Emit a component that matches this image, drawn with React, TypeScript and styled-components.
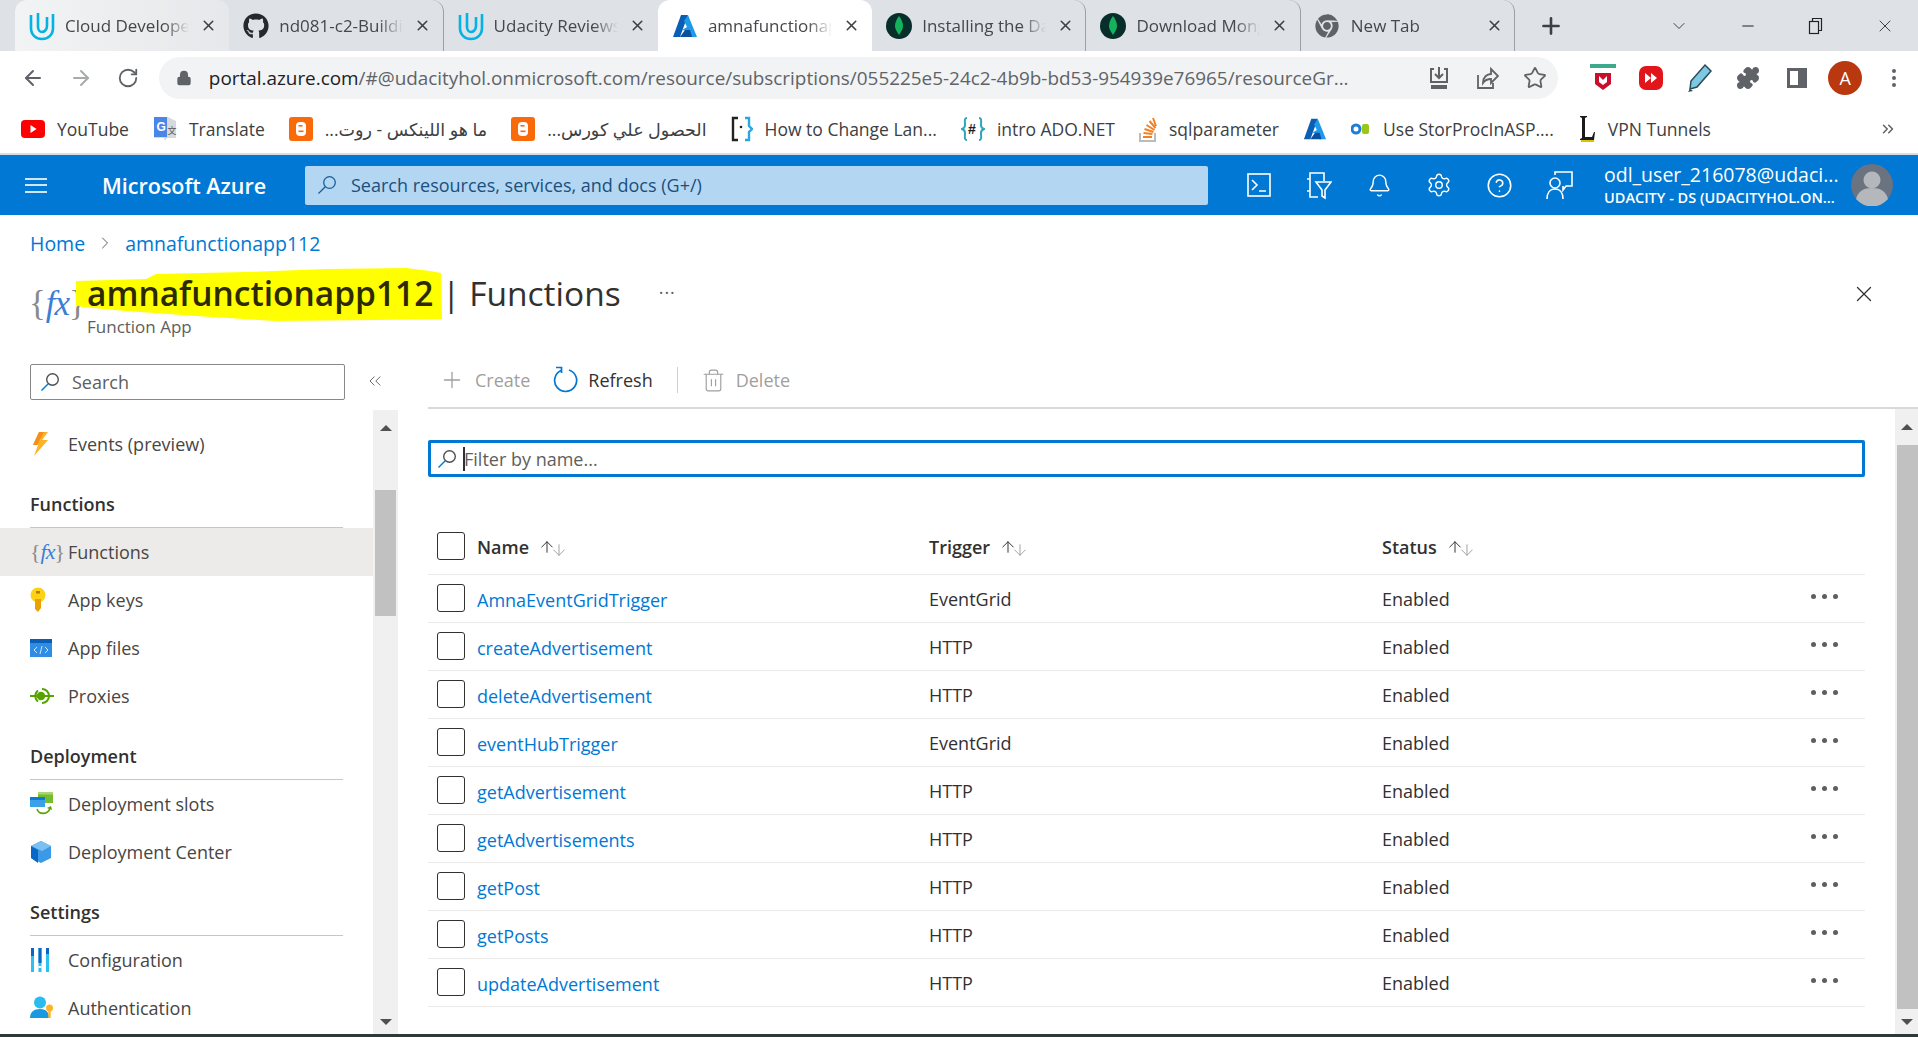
import React from 'react'
import styled, { createGlobalStyle } from 'styled-components'
import { FaGithub, FaChrome } from 'react-icons/fa'
import { ArrowLeft, ArrowRight, RotateCw, Lock, Star, Puzzle, Plus, Minus, X, ChevronDown, Bell, Settings, CircleHelp, EllipsisVertical, ChevronsRight, ChevronRight, ChevronsLeft, Trash2, ArrowUp, ArrowDown } from 'lucide-react'

const FONT = '"Open Sans", "Noto Sans", "DejaVu Sans", sans-serif'

const GlobalStyle = createGlobalStyle`
  html, body { margin: 0; padding: 0; background: #fff; }
  body { font-family: ${FONT}; color: #323130; }
  * { box-sizing: border-box; }
`

/* ---------- drawn icons ---------- */
const UdacityLogo = () => (
  <svg width="26" height="30" viewBox="0 0 26 30" fill="none" stroke="#02b3e4" strokeWidth="2.6">
    <path d="M2 4v13c0 7 5 11 11 11s11-4 11-11V3" />
    <path d="M9 2v14c0 3 2 5 4 5s5-2 5-6V6" />
  </svg>
)
const AzureLogo = ({ size = 26 }: { size?: number }) => (
  <svg width={size} height={size} viewBox="0 0 26 26">
    <path d="M9 2h7L8 24H1z" fill="#0a5fb4" />
    <path d="M16 2l9 22h-7l-2-6-6-1 5-3-3-6z" fill="#1f9ae8" />
    <path d="M8 24l5-7h5l2 7z" fill="#0b4f9e" />
  </svg>
)
const MongoLogo = () => (
  <svg width="26" height="26" viewBox="0 0 26 26">
    <circle cx="13" cy="13" r="13" fill="#072e2a" />
    <path d="M13 3c3 4 4 7 4 10s-2 6-4 9c-2-3-4-6-4-9s1-6 4-10z" fill="#12b35c" />
  </svg>
)
const BloggerLogo = () => (
  <svg width="24" height="24" viewBox="0 0 24 24">
    <rect width="24" height="24" rx="3" fill="#f96a0b" />
    <rect x="7" y="5" width="10" height="14" rx="4" fill="#fff" />
    <rect x="9.5" y="8" width="4" height="1.6" fill="#f96a0b" />
    <rect x="9.5" y="13.5" width="5" height="1.6" fill="#f96a0b" />
  </svg>
)
const YoutubeLogo = () => (
  <svg width="24" height="18" viewBox="0 0 24 18">
    <rect width="24" height="18" rx="4" fill="#f00" />
    <path d="M9.5 5l6 4-6 4z" fill="#fff" />
  </svg>
)
const TranslateLogo = () => (
  <svg width="24" height="26" viewBox="0 0 24 26">
    <path d="M1 1h14l8 4v17l-9 0-2 3-1-3H1z" fill="#d7d9dc" />
    <path d="M1 1h13v20H1z" fill="#4a86e8" />
    <text x="3.5" y="15" fontSize="12" fontWeight="700" fill="#fff" fontFamily="Liberation Sans">G</text>
    <text x="14.5" y="18" fontSize="9" fill="#555" fontFamily="Noto Sans CJK SC">文</text>
  </svg>
)
const BracketLogo = () => (
  <svg width="22" height="26" viewBox="0 0 22 26" fill="none" strokeWidth="2.4">
    <path d="M7 2H2v22h5" stroke="#222" />
    <path d="M14 2h4v8l3 3-3 3v8h-4" stroke="#2aa7e0" />
    <circle cx="10" cy="11" r="1.3" fill="#222" />
  </svg>
)
const CSharpLogo = () => (
  <svg width="24" height="26" viewBox="0 0 24 26" fill="none">
    <path d="M6 2C3 2 4 6 4 9s-3 4-3 4 3 1 3 4-1 7 2 7M18 2c3 0 2 4 2 7s3 4 3 4-3 1-3 4 1 7-2 7" stroke="#2fa6b8" strokeWidth="2" />
    <text x="7" y="18" fontSize="14" fontWeight="700" fill="#222" fontFamily="Liberation Sans">#</text>
  </svg>
)
const StackLogo = () => (
  <svg width="18" height="26" viewBox="0 0 18 26" fill="none">
    <path d="M1 17v8h15v-8" stroke="#bcbbbb" strokeWidth="2" />
    <path d="M4 21h9M4.500 17l9 1M5.500 13l9 3M7.500 9l8 5M10.500 5l6 7M14 2l3 8" stroke="#f48024" strokeWidth="2" />
  </svg>
)
const OBLogo = () => (
  <svg width="20" height="14" viewBox="0 0 20 14">
    <circle cx="5" cy="7" r="4" fill="none" stroke="#1c7ed6" strokeWidth="3" />
    <rect x="11" y="2" width="7" height="10" rx="2" fill="#9ac61c" />
  </svg>
)
const LetterLogo = () => (
  <svg width="18" height="28" viewBox="0 0 18 28">
    <path d="M2 1h7v1l-2 1v19h7l2-5h1l-1 8H2v-1l2-1V3L2 2z" fill="#1b1b1b" />
    <rect x="3" y="25" width="13" height="2" fill="#d9c400" />
  </svg>
)
const McAfeeLogo = () => (
  <svg width="26" height="28" viewBox="0 0 26 28">
    <rect x="0" y="0" width="26" height="4" fill="#3fa98c" />
    <path d="M5 9h16v11l-8 6-8-6z" fill="#c8102e" />
    <path d="M9 12v6l4 3 4-3v-6l-4 4z" fill="#fff" />
  </svg>
)
const RedPlayLogo = () => (
  <svg width="24" height="24" viewBox="0 0 24 24">
    <rect width="24" height="24" rx="7" fill="#e0161b" />
    <path d="M6 7l6 5-6 5zM12 7l6 5-6 5z" fill="#fff" />
  </svg>
)
const MarkerIcon = () => (
  <svg width="26" height="30" viewBox="0 0 26 30">
    <path d="M18 2l6 6-14 16-7 2 1-8z" fill="#7ec8e3" stroke="#2a4b5a" strokeWidth="1.5" />
    <path d="M3 26l-2 3 5-1z" fill="#2a4b5a" />
  </svg>
)
const InstallIcon = () => (
  <svg width="24" height="24" viewBox="0 0 24 24" fill="none" stroke="#5f6368" strokeWidth="2">
    <path d="M7 3H4v13h16V3h-3" />
    <path d="M12 1v10M8 8l4 4 4-4" />
    <path d="M5 20h14v2H5z" fill="#5f6368" />
  </svg>
)
const ShareIcon = () => (
  <svg width="24" height="24" viewBox="0 0 24 24" fill="none" stroke="#5f6368" strokeWidth="1.8">
    <path d="M3 9v13h15v-5" />
    <path d="M8 17c0-6 4-9 8-9V3l7 7-7 7v-4c-4 0-6 1-8 4z" />
  </svg>
)
const SidePanelIcon = () => (
  <svg width="22" height="22" viewBox="0 0 22 22">
    <path d="M1 1h20v20H1z" fill="#5f6368" />
    <path d="M4 4h8v14H4z" fill="#fff" />
  </svg>
)
const RestoreIcon = () => (
  <svg width="18" height="18" viewBox="0 0 18 18" fill="none" stroke="#222" strokeWidth="1.2">
    <rect x="2.500" y="4.500" width="9" height="12" />
    <path d="M5.500 4.500v-3h9v12h-3" />
  </svg>
)
const TerminalIcon = () => (
  <svg width="26" height="26" viewBox="0 0 26 26" fill="none" stroke="#fff" strokeWidth="1.6">
    <rect x="2" y="2" width="22" height="22" />
    <path d="M6 8l5 5-5 5M13 19h7" />
  </svg>
)
const DirectoryIcon = () => (
  <svg width="26" height="30" viewBox="0 0 26 30" fill="none" stroke="#fff" strokeWidth="1.6">
    <path d="M4 6V3h14v8M4 24v3h8M4 6v18" />
    <path d="M1 9h3M1 21h3" />
    <path d="M10 12h15l-6 8v8l-3-2v-6z" />
  </svg>
)
const FeedbackIcon = () => (
  <svg width="28" height="30" viewBox="0 0 28 30" fill="none" stroke="#fff" strokeWidth="1.6">
    <path d="M10 5V2h17v14h-6l-3 4v-4" />
    <circle cx="10" cy="13" r="5" />
    <path d="M2 29c0-6 3-10 8-10s8 4 8 10" />
  </svg>
)
const UserAvatar = () => (
  <svg width="42" height="42" viewBox="0 0 42 42">
    <circle cx="21" cy="21" r="21" fill="#6b7280" />
    <circle cx="21" cy="16" r="8.500" fill="#b4b7bb" />
    <path d="M5 35c2-8 8-11 16-11s14 3 16 11a21 21 0 0 1-32 0z" fill="#b4b7bb" />
  </svg>
)
const SearchGlyph = ({ size = 20 }: { size?: number }) => (
  <svg width={size} height={size} viewBox="0 0 20 20" fill="none" stroke="#0078d4" strokeWidth="1.4">
    <circle cx="12.500" cy="7.500" r="5.800" stroke="#505050" />
    <path d="M8.300 11.700L1.500 18.500" />
  </svg>
)
const HeaderSearchGlyph = () => (
  <svg width="20" height="22" viewBox="0 0 20 20" fill="none" stroke="#1b5e99" strokeWidth="1.3">
    <circle cx="12.500" cy="7.500" r="5.800" />
    <path d="M8.300 11.700L1.500 18.500" />
  </svg>
)
const RefreshGlyph = () => (
  <svg width="26" height="28" viewBox="0 0 26 28" fill="none" stroke="#0078d4" strokeWidth="1.7">
    <path d="M9 4.500A11 11 0 1 0 17 4" />
    <path d="M4 1.500h5.500V7" />
  </svg>
)
const Bolt = () => (
  <svg width="20" height="26" viewBox="0 0 20 26">
    <path d="M9 1h9l-6 8h6L4 25l4-11H3z" fill="#fcb426" />
    <path d="M9 1h5L7 14H3z" fill="#f78d1e" />
  </svg>
)
const KeyIcon = () => (
  <svg width="18" height="26" viewBox="0 0 18 26">
    <circle cx="8" cy="8" r="7.500" fill="#fcd116" />
    <path d="M5 12h6v9l-3 4-3-3z" fill="#eaa200" />
    <rect x="6" y="4" width="4" height="2.500" fill="#b97c00" />
  </svg>
)
const AppFilesIcon = () => (
  <svg width="22" height="18" viewBox="0 0 22 18">
    <rect width="22" height="18" fill="#2f8de4" />
    <rect width="22" height="4" fill="#0a5fb4" />
    <path d="M7 8l-3 3 3 3M15 8l3 3-3 3M12 7l-2 8" stroke="#cfe6fb" strokeWidth="1" fill="none" />
  </svg>
)
const ProxyIcon = () => (
  <svg width="24" height="16" viewBox="0 0 24 16" fill="none" stroke="#57a300" strokeWidth="2">
    <path d="M0 8h24" />
    <path d="M12 1a7 7 0 0 1 0 14" />
    <path d="M8 2.500a7 7 0 0 0 0 11" />
    <circle cx="11" cy="8" r="3.300" fill="#57a300" />
  </svg>
)
const SlotsIcon = () => (
  <svg width="24" height="24" viewBox="0 0 24 24">
    <rect x="8" y="0" width="15" height="11" fill="#76bc2d" />
    <rect x="8" y="0" width="15" height="2.500" fill="#a7d672" />
    <rect x="0" y="5" width="15" height="10" fill="#3aa0e8" />
    <rect x="0" y="5" width="15" height="3" fill="#0a7cd1" />
    <path d="M7 17c2 6 11 6 13-1" fill="none" stroke="#57a300" strokeWidth="1.600" />
    <path d="M17 16l4-2 1 4z" fill="#57a300" />
  </svg>
)
const BoxIcon = () => (
  <svg width="22" height="24" viewBox="0 0 22 24">
    <path d="M11 1l10 5v12l-10 5-10-5V6z" fill="#3a9ae8" />
    <path d="M11 1l10 5-9 5L1 6z" fill="#7cc0f2" />
    <path d="M1 6l7 4v13l-7-5z" fill="#0a68c4" />
  </svg>
)
const ConfigIcon = () => (
  <svg width="20" height="24" viewBox="0 0 20 24">
    <rect x="1" y="0" width="3" height="24" fill="#2bc0ef" />
    <rect x="1" y="0" width="3" height="8" fill="#0a68c4" />
    <rect x="8.500" y="0" width="3" height="24" fill="#2bc0ef" />
    <rect x="8.500" y="0" width="3" height="15" fill="#0a68c4" />
    <rect x="8.500" y="18" width="3" height="2" fill="#fff" />
    <rect x="16" y="0" width="3" height="24" fill="#2bc0ef" />
    <rect x="16" y="0" width="3" height="6" fill="#0a68c4" />
  </svg>
)
const AuthIcon = () => (
  <svg width="24" height="24" viewBox="0 0 24 24">
    <circle cx="10" cy="6.500" r="6" fill="#2bbcef" />
    <path d="M0 22c0-6 4-9 10-9s9 3 9 9z" fill="#1a98e0" />
    <circle cx="19.500" cy="12" r="3.500" fill="#fcb426" />
    <rect x="18.300" y="13" width="2.400" height="9" fill="#fcb426" />
  </svg>
)

/* ---------- browser chrome ---------- */
const Page = styled.div`
  width: 1918px;
  height: 1037px;
  overflow: hidden;
  display: flex;
  flex-direction: column;
`
const TabStrip = styled.div`
  height: 51px;
  background: #dee1e6;
  display: flex;
  align-items: stretch;
  padding-left: 15px;
`
const Tab = styled.div<{ $active?: boolean; $hover?: boolean; $sep?: boolean }>`
  position: relative;
  width: 214.3px;
  display: flex;
  align-items: center;
  padding-left: 14px;
  background: ${p => (p.$active ? '#fff' : p.$hover ? 'linear-gradient(90deg, #f1f3f4, #e6e8eb)' : 'transparent')};
  border-radius: 12px 12px 0 0;
  border-right: ${p => (p.$sep ? '1px solid #9aa0a6' : 'none')};
  background-clip: padding-box;
  margin-top: ${p => (p.$active || p.$hover ? '0' : '0')};
`
const TabIcon = styled.span`
  width: 36px;
  flex: none;
  display: flex;
  align-items: center;
`
const TabLabel = styled.span<{ $active?: boolean }>`
  width: 124px;
  flex: none;
  overflow: hidden;
  white-space: nowrap;
  font-size: 17px;
  color: #45474a;
  -webkit-mask-image: linear-gradient(90deg, #000 80%, transparent 100%);
  mask-image: linear-gradient(90deg, #000 80%, transparent 100%);
`
const TabClose = styled.span`
  margin-left: 11px;
  display: flex;
  color: #3c4043;
`
const NewTab = styled.span`
  margin-left: 23px;
  display: flex;
  align-items: center;
  color: #3c4043;
`
const WindowControls = styled.div`
  margin-left: auto;
  display: flex;
  align-items: center;
  gap: 50px;
  padding-right: 23px;
  color: #222;
`
const AddressRow = styled.div`
  height: 54px;
  background: #fff;
  display: flex;
  align-items: center;
  padding-left: 21px;
`
const NavButton = styled.span<{ $dim?: boolean }>`
  width: 48px;
  display: flex;
  color: ${p => (p.$dim ? '#a8abae' : '#5f6368')};
`
const Omnibox = styled.div`
  width: 1401px;
  height: 42px;
  margin-left: -6px;
  background: #f1f3f4;
  border-radius: 21px;
  display: flex;
  align-items: center;
  padding-left: 17px;
`
const LockSlot = styled.span`
  width: 33px;
  display: flex;
  color: #5f6368;
`
const Url = styled.span`
  width: 1212px;
  font-size: 18.9px;
  color: #5f6368;
  white-space: nowrap;
  overflow: hidden;
  b { font-weight: 400; color: #202124; }
`
const OmniActions = styled.div`
  display: flex;
  gap: 24px;
  align-items: center;
  margin-left: 6px;
  color: #5f6368;
`
const Extensions = styled.div`
  margin-left: 20px;
  display: flex;
  align-items: center;
  color: #5f6368;
  width: 340px;
`
const ExtSlot = styled.span`
  width: 48.500px;
  display: flex;
  justify-content: center;
`
const ProfileCircle = styled.span`
  width: 34px;
  height: 34px;
  border-radius: 50%;
  background: #b9380f;
  color: #fff;
  font-size: 18px;
  display: flex;
  align-items: center;
  justify-content: center;
`
const BookmarkBar = styled.div`
  height: 50px;
  background: #fff;
  border-bottom: 2px solid #dadce0;
  display: flex;
  align-items: center;
  padding: 0 21px;
  gap: 24px;
`
const Bookmark = styled.span`
  display: flex;
  align-items: center;
  gap: 12px;
  font-size: 17.500px;
  white-space: nowrap;
  color: #3c4043;
`
const BookmarkMore = styled.span`
  margin-left: auto;
  display: flex;
  color: #5f6368;
`

/* ---------- azure header ---------- */
const AzureBar = styled.header`
  height: 60px;
  background: #0078d4;
  display: flex;
  align-items: center;
  color: #fff;
`
const Hamburger = styled.span`
  width: 22px;
  height: 15px;
  margin-left: 25px;
  border-top: 2px solid #cfe6fb;
  border-bottom: 2px solid #cfe6fb;
  position: relative;
  &::after {
    content: '';
    position: absolute;
    left: 0;
    right: 0;
    top: 4.500px;
    height: 2px;
    background: #cfe6fb;
  }
`
const Brand = styled.span`
  width: 203px;
  margin-left: 55px;
  font-size: 21.500px;
  font-weight: 600;
  white-space: nowrap;
`
const GlobalSearch = styled.div`
  width: 903px;
  height: 39px;
  background: #b3d6f2;
  border-radius: 2px;
  display: flex;
  align-items: center;
  gap: 14px;
  padding-left: 12px;
  font-size: 18px;
  color: #1b4f7d;
`
const HeaderIcons = styled.div`
  margin-left: 21px;
  display: flex;
  align-items: center;
`
const HeaderIcon = styled.span`
  width: 60px;
  display: flex;
  justify-content: center;
`
const Account = styled.div`
  margin-left: 15px;
  width: 247px;
  display: flex;
  flex-direction: column;
  line-height: 1;
`
const AccountName = styled.span`
  font-size: 19.500px;
  white-space: nowrap;
`
const AccountDirectory = styled.span`
  font-size: 14.500px;
  font-weight: 600;
  margin-top: 6px;
  white-space: nowrap;
`

/* ---------- blade ---------- */
const Breadcrumb = styled.nav`
  height: 55px;
  display: flex;
  align-items: center;
  gap: 10px;
  padding: 1px 0 0 30px;
  font-size: 19.500px;
  color: #0078d4;
`
const Crumb = styled.span`
  white-space: nowrap;
`
const TitleBlock = styled.div`
  height: 75px;
  position: relative;
  display: flex;
  padding-left: 29px;
`
const FxLogo = styled.span<{ $small?: boolean }>`
  font-family: "Liberation Serif", serif;
  font-size: ${p => (p.$small ? '22px' : '35px')};
  line-height: 1;
  color: #8a8a8a;
  white-space: nowrap;
  i { color: #3a7fd5; letter-spacing: -1px; }
`
const TitleLogoSlot = styled.span`
  width: 58px;
  padding-top: 16px;
  flex: none;
`
const TitleText = styled.div`
  position: relative;
  flex: none;
`
const Marker = styled.svg`
  position: absolute;
  left: -11px;
  top: -3px;
  z-index: 0;
`
const Title = styled.h1`
  position: relative;
  margin: 0;
  font-size: 33.500px;
  font-weight: 400;
  line-height: 46px;
  white-space: nowrap;
  color: #323130;
  b { font-weight: 600; color: #2d2a00; }
`
const Subtitle = styled.div`
  position: relative;
  font-size: 17px;
  line-height: 24px;
  margin-top: -1px;
  color: #605e5c;
`
const TitleMore = styled.span`
  margin: 10px 0 0 38px;
  font-size: 18px;
  color: #605e5c;
  letter-spacing: 1px;
`
const BladeClose = styled.span`
  margin-left: auto;
  margin-right: 41px;
  margin-top: 11px;
  color: #323130;
`
const Body = styled.div`
  flex: 1;
  display: flex;
  min-height: 0;
`
const Sidebar = styled.aside`
  width: 398px;
  flex: none;
  display: flex;
  flex-direction: column;
`
const SideSearchRow = styled.div`
  height: 65px;
  display: flex;
  align-items: flex-start;
  padding: 19px 0 0 30px;
`
const SideSearch = styled.div`
  width: 315px;
  height: 36px;
  border: 1px solid #8a8886;
  border-radius: 2px;
  display: flex;
  align-items: center;
  gap: 12px;
  padding-left: 9px;
  font-size: 18px;
  color: #605e5c;
`
const Collapse = styled.span`
  margin: 7px 0 0 20px;
  color: #605e5c;
  display: flex;
`
const SideScrollArea = styled.div`
  flex: 1;
  min-height: 0;
  display: flex;
`
const SideNav = styled.div`
  width: 373px;
  flex: none;
  padding-top: 10px;
  overflow: hidden;
`
const NavItem = styled.div<{ $active?: boolean }>`
  height: 48px;
  display: flex;
  align-items: center;
  padding-left: 30px;
  font-size: 18px;
  color: #484644;
  background: ${p => (p.$active ? '#edebe9' : 'transparent')};
  white-space: nowrap;
`
const NavIcon = styled.span`
  width: 38px;
  flex: none;
  display: flex;
  align-items: center;
`
const NavHeader = styled.div`
  height: 60px;
  margin: 0 30px;
  width: 313px;
  display: flex;
  align-items: flex-end;
  padding-bottom: 11px;
  border-bottom: 1px solid #c8c6c4;
  font-size: 18px;
  font-weight: 600;
  color: #323130;
`
const Scrollbar = styled.div<{ $width: number }>`
  width: ${p => p.$width}px;
  flex: none;
  background: #f0f0f0;
  display: flex;
  flex-direction: column;
  align-items: center;
  position: relative;
`
const ScrollBtn = styled.span<{ $down?: boolean }>`
  height: ${p => (p.$down ? '25px' : '36px')};
  flex: none;
  display: flex;
  align-items: center;
  justify-content: center;
  &::before {
    content: '';
    border-left: 6px solid transparent;
    border-right: 6px solid transparent;
    ${p => (p.$down ? 'border-top: 6px solid #505050;' : 'border-bottom: 6px solid #505050;')}
  }
`
const ScrollThumb = styled.span<{ $right?: boolean }>`
  display: block;
  width: 21px;
  background: #c1c1c1;
  flex: none;
  align-self: ${p => (p.$right ? 'flex-end' : 'center')};
`
const ScrollGap = styled.span`
  flex: 1;
`
const Main = styled.main`
  flex: 1;
  min-width: 0;
  padding-left: 30px;
  display: flex;
  flex-direction: column;
`
const Toolbar = styled.div`
  height: 64px;
  flex: none;
  border-bottom: 2px solid #d9d9d9;
  display: flex;
  align-items: center;
  padding: 8px 0 0 11px;
  font-size: 18px;
`
const ToolButton = styled.span<{ $disabled?: boolean }>`
  display: flex;
  align-items: center;
  gap: 10px;
  color: ${p => (p.$disabled ? '#a19f9d' : '#323130')};
`
const ToolSep = styled.span`
  width: 1px;
  height: 26px;
  background: #d2d0ce;
  margin: 0 23px 0 24px;
`
const FilterBox = styled.div`
  width: 1437px;
  height: 37px;
  margin-top: 31px;
  flex: none;
  border: 3px solid #0078d4;
  border-radius: 2px;
  display: flex;
  align-items: center;
  padding-left: 6px;
  font-size: 18px;
  color: #605e5c;
`
const Caret = styled.span`
  width: 2px;
  height: 24px;
  background: #323130;
  margin: 0 -1px 0 6px;
`
const Table = styled.div`
  width: 1437px;
  margin-top: 43px;
`
const RowGrid = styled.div<{ $head?: boolean }>`
  display: grid;
  grid-template-columns: 49px 452px 453px 1fr 54px;
  align-items: center;
  height: ${p => (p.$head ? '55px' : '48px')};
  border-bottom: 1px solid #edebe9;
  font-size: 18px;
  color: #323130;
`
const CheckBox = styled.span`
  width: 28px;
  height: 28px;
  margin-left: 9px;
  margin-top: -2px;
  border: 1px solid #323130;
  border-radius: 3px;
`
const HeadCell = styled.span`
  display: flex;
  align-items: center;
  gap: 9px;
  font-weight: 600;
`
const SortArrows = styled.span`
  display: flex;
  align-items: center;
  svg + svg { margin-left: -6px; margin-top: 5px; }
`
const FnLink = styled.a`
  color: #0078d4;
  margin-top: 3px;
  text-decoration: none;
`
const Dots = styled.span`
  display: flex;
  gap: 6px;
  margin-top: -4px;
  i { width: 5px; height: 5px; border-radius: 50%; background: #605e5c; }
`
const MainScroll = styled.div`
  display: flex;
`
const MainColumn = styled.div`
  flex: 1;
  min-width: 0;
`
const TaskEdge = styled.div`
  height: 3px;
  flex: none;
  background: #2b3a38;
`

const tabs = [
  { icon: <UdacityLogo />, label: 'Cloud Developer', hover: true },
  { icon: <FaGithub size={26} color="#24292e" />, label: 'nd081-c2-Building', sep: true },
  { icon: <UdacityLogo />, label: 'Udacity Reviews' },
  { icon: <AzureLogo />, label: 'amnafunctionapp', active: true },
  { icon: <MongoLogo />, label: 'Installing the Database', sep: true },
  { icon: <MongoLogo />, label: 'Download MongoDB', sep: true },
  { icon: <FaChrome size={24} color="#5f6368" />, label: 'New Tab', sep: true },
]

const functions = [
  ['AmnaEventGridTrigger', 'EventGrid'],
  ['createAdvertisement', 'HTTP'],
  ['deleteAdvertisement', 'HTTP'],
  ['eventHubTrigger', 'EventGrid'],
  ['getAdvertisement', 'HTTP'],
  ['getAdvertisements', 'HTTP'],
  ['getPost', 'HTTP'],
  ['getPosts', 'HTTP'],
  ['updateAdvertisement', 'HTTP'],
]

const Sort = () => (
  <SortArrows>
    <ArrowUp size={18} strokeWidth={1.3} color="#323130" />
    <ArrowDown size={18} strokeWidth={1.3} color="#a19f9d" />
  </SortArrows>
)

const App = () => {
  return (
    <Page>
      <GlobalStyle />
      <TabStrip>
        {tabs.map(t => (
          <Tab key={t.label} $active={t.active} $hover={t.hover} $sep={t.sep}>
            <TabIcon>{t.icon}</TabIcon>
            <TabLabel>{t.label}</TabLabel>
            <TabClose><X size={17} strokeWidth={2.2} /></TabClose>
          </Tab>
        ))}
        <NewTab><Plus size={26} strokeWidth={2.4} /></NewTab>
        <WindowControls>
          <ChevronDown size={20} strokeWidth={1} />
          <Minus size={18} strokeWidth={1.4} />
          <RestoreIcon />
          <X size={20} strokeWidth={1} />
        </WindowControls>
      </TabStrip>

      <AddressRow>
        <NavButton><ArrowLeft size={24} strokeWidth={2} /></NavButton>
        <NavButton $dim><ArrowRight size={24} strokeWidth={2} /></NavButton>
        <NavButton><RotateCw size={22} strokeWidth={2} /></NavButton>
        <Omnibox>
          <LockSlot><Lock size={16} fill="#5f6368" /></LockSlot>
          <Url><b>portal.azure.com</b>/#@udacityhol.onmicrosoft.com/resource/subscriptions/055225e5-24c2-4b9b-bd53-954939e76965/resourceGr...</Url>
          <OmniActions>
            <InstallIcon />
            <ShareIcon />
            <Star size={24} strokeWidth={1.8} />
          </OmniActions>
        </Omnibox>
        <Extensions>
          <ExtSlot><McAfeeLogo /></ExtSlot>
          <ExtSlot><RedPlayLogo /></ExtSlot>
          <ExtSlot><MarkerIcon /></ExtSlot>
          <ExtSlot><Puzzle size={24} fill="#5f6368" /></ExtSlot>
          <ExtSlot><SidePanelIcon /></ExtSlot>
          <ExtSlot><ProfileCircle>A</ProfileCircle></ExtSlot>
          <ExtSlot><EllipsisVertical size={24} /></ExtSlot>
        </Extensions>
      </AddressRow>

      <BookmarkBar>
        <Bookmark><YoutubeLogo />YouTube</Bookmark>
        <Bookmark><TranslateLogo />Translate</Bookmark>
        <Bookmark><BloggerLogo /><span dir="rtl">ما هو اللينكس - روت...</span></Bookmark>
        <Bookmark><BloggerLogo /><span dir="rtl">الحصول علي كورس...</span></Bookmark>
        <Bookmark><BracketLogo />How to Change Lan...</Bookmark>
        <Bookmark><CSharpLogo />intro ADO.NET</Bookmark>
        <Bookmark><StackLogo />sqlparameter</Bookmark>
        <Bookmark><AzureLogo size={24} /></Bookmark>
        <Bookmark><OBLogo />Use StorProcInASP....</Bookmark>
        <Bookmark><LetterLogo />VPN Tunnels</Bookmark>
        <BookmarkMore><ChevronsRight size={18} /></BookmarkMore>
      </BookmarkBar>

      <AzureBar>
        <Hamburger />
        <Brand>Microsoft Azure</Brand>
        <GlobalSearch><HeaderSearchGlyph />Search resources, services, and docs (G+/)</GlobalSearch>
        <HeaderIcons>
          <HeaderIcon><TerminalIcon /></HeaderIcon>
          <HeaderIcon><DirectoryIcon /></HeaderIcon>
          <HeaderIcon><Bell size={25} strokeWidth={1.3} /></HeaderIcon>
          <HeaderIcon><Settings size={26} strokeWidth={1.3} /></HeaderIcon>
          <HeaderIcon><CircleHelp size={27} strokeWidth={1.4} /></HeaderIcon>
          <HeaderIcon><FeedbackIcon /></HeaderIcon>
        </HeaderIcons>
        <Account>
          <AccountName>odl_user_216078@udaci...</AccountName>
          <AccountDirectory>UDACITY - DS (UDACITYHOL.ON...</AccountDirectory>
        </Account>
        <UserAvatar />
      </AzureBar>

      <Breadcrumb>
        <Crumb>Home</Crumb>
        <ChevronRight size={20} strokeWidth={1.2} color="#605e5c" />
        <Crumb>amnafunctionapp112</Crumb>
      </Breadcrumb>

      <TitleBlock>
        <TitleLogoSlot>
          <FxLogo>{'{'}<i>fx</i>{'}'}</FxLogo>
        </TitleLogoSlot>
        <TitleText>
          <Marker width="380" height="60" viewBox="0 0 380 60">
            <path d="M0 14 L70 12 L80 7 L170 5 L250 2 L330 1 L354 4 L365 6 L366 52 L300 53 L200 54 L120 49 L50 44 L6 40 L0 38 Z" fill="#ffff00" />
          </Marker>
          <Title><b>amnafunctionapp112</b> | Functions</Title>
          <Subtitle>Function App</Subtitle>
        </TitleText>
        <TitleMore>···</TitleMore>
        <BladeClose><X size={26} strokeWidth={1.2} /></BladeClose>
      </TitleBlock>

      <Body>
        <Sidebar>
          <SideSearchRow>
            <SideSearch><SearchGlyph />Search</SideSearch>
            <Collapse><ChevronsLeft size={20} strokeWidth={1.1} /></Collapse>
          </SideSearchRow>
          <SideScrollArea>
            <SideNav>
              <NavItem><NavIcon><Bolt /></NavIcon>Events (preview)</NavItem>
              <NavHeader>Functions</NavHeader>
              <NavItem $active><NavIcon><FxLogo $small>{'{'}<i>fx</i>{'}'}</FxLogo></NavIcon>Functions</NavItem>
              <NavItem><NavIcon><KeyIcon /></NavIcon>App keys</NavItem>
              <NavItem><NavIcon><AppFilesIcon /></NavIcon>App files</NavItem>
              <NavItem><NavIcon><ProxyIcon /></NavIcon>Proxies</NavItem>
              <NavHeader>Deployment</NavHeader>
              <NavItem><NavIcon><SlotsIcon /></NavIcon>Deployment slots</NavItem>
              <NavItem><NavIcon><BoxIcon /></NavIcon>Deployment Center</NavItem>
              <NavHeader>Settings</NavHeader>
              <NavItem><NavIcon><ConfigIcon /></NavIcon>Configuration</NavItem>
              <NavItem><NavIcon><AuthIcon /></NavIcon>Authentication</NavItem>
            </SideNav>
            <Scrollbar $width={25}>
              <ScrollBtn />
              <ScrollThumb style={{ height: 126, marginTop: 44 }} />
              <ScrollGap />
              <ScrollBtn $down />
            </Scrollbar>
          </SideScrollArea>
        </Sidebar>
        <Main>
          <Toolbar>
            <ToolButton $disabled><Plus size={26} strokeWidth={1.2} />Create</ToolButton>
            <ToolButton style={{ marginLeft: 22 }}><RefreshGlyph />Refresh</ToolButton>
            <ToolSep />
            <ToolButton $disabled><Trash2 size={25} strokeWidth={1.1} />Delete</ToolButton>
          </Toolbar>
          <MainScroll style={{ flex: 1, minHeight: 0 }}>
            <MainColumn>
              <FilterBox>
                <SearchGlyph />
                <Caret />Filter by name...
              </FilterBox>
              <Table>
                <RowGrid $head>
                  <CheckBox />
                  <HeadCell>Name <Sort /></HeadCell>
                  <HeadCell>Trigger <Sort /></HeadCell>
                  <HeadCell>Status <Sort /></HeadCell>
                  <span />
                </RowGrid>
                {functions.map(([name, trigger]) => (
                  <RowGrid key={name}>
                    <CheckBox />
                    <FnLink>{name}</FnLink>
                    <span>{trigger}</span>
                    <span>Enabled</span>
                    <Dots><i /><i /><i /></Dots>
                  </RowGrid>
                ))}
              </Table>
            </MainColumn>
            <Scrollbar $width={23}>
              <ScrollBtn />
              <ScrollThumb $right style={{ flex: 1 }} />
              <ScrollBtn $down />
            </Scrollbar>
          </MainScroll>
        </Main>
      </Body>
      <TaskEdge />
    </Page>
  )
}

export default App
